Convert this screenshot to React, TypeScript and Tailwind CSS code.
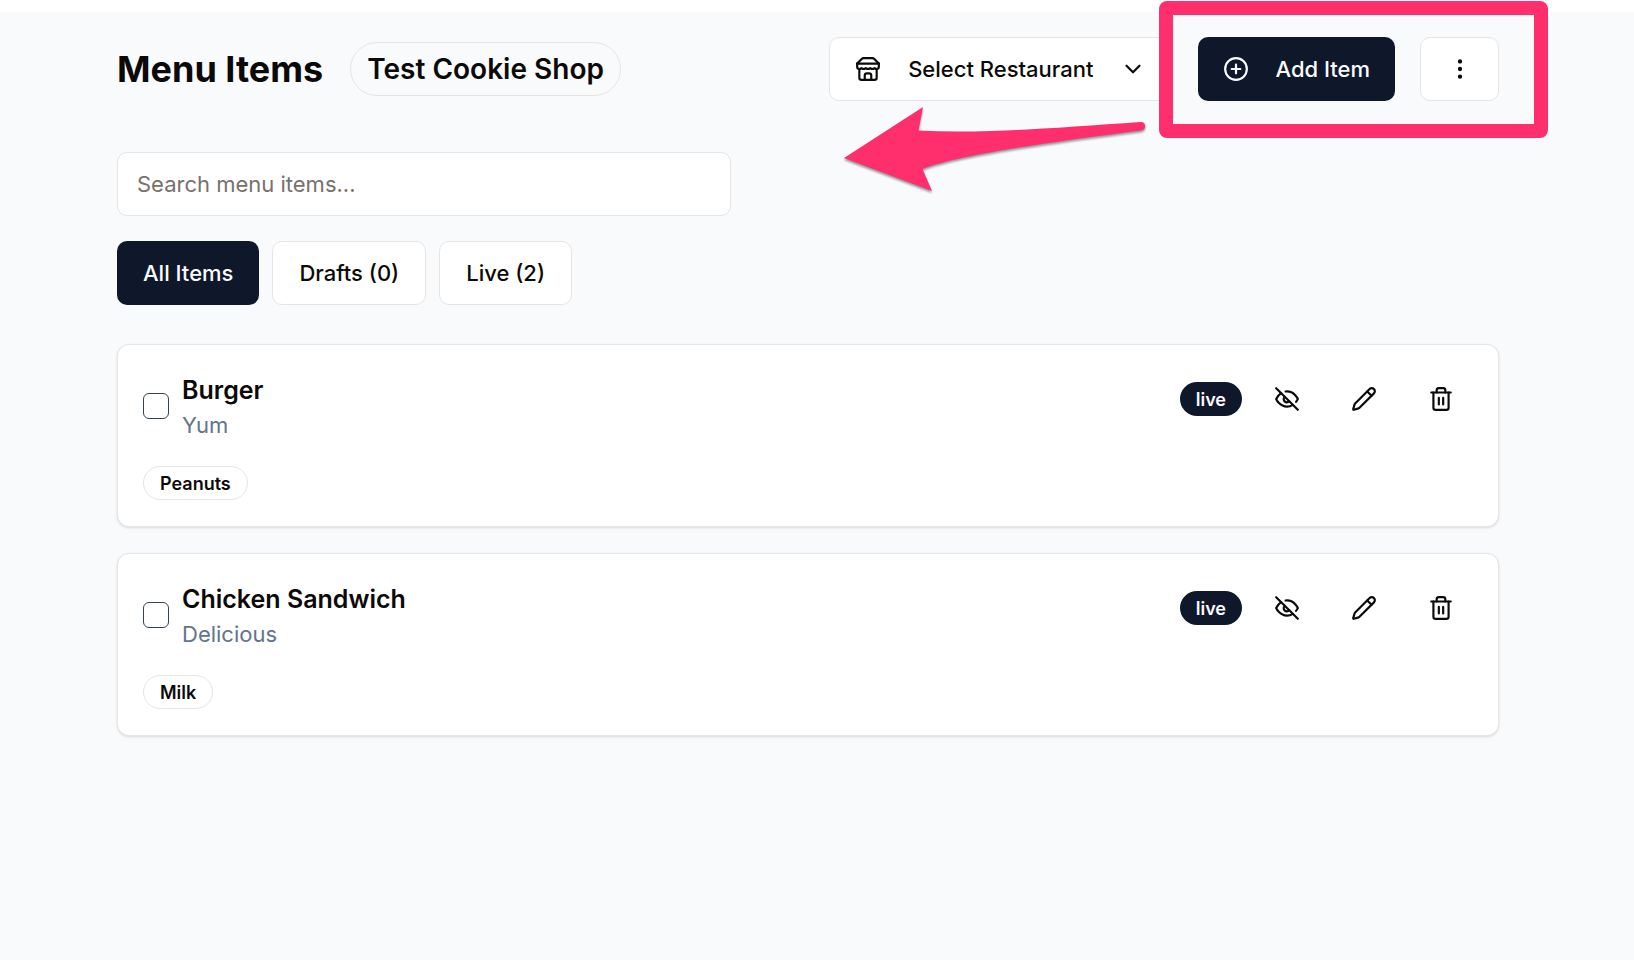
import { ChevronDown, CirclePlus, EllipsisVertical, Pencil, Trash2 } from "lucide-react";
import type { ReactNode } from "react";

type MenuItem = {
  id: string;
  name: string;
  description: string;
  allergens: string[];
};

const items: MenuItem[] = [
  { id: "burger", name: "Burger", description: "Yum", allergens: ["Peanuts"] },
  { id: "chicken", name: "Chicken Sandwich", description: "Delicious", allergens: ["Milk"] },
];

const outlineButton =
  "flex h-16 items-center justify-center rounded-[10px] border border-[#e7e5e4] bg-white text-[22px] font-medium";
const solidButton =
  "flex h-16 items-center justify-center rounded-[10px] bg-[#0f172a] text-[22px] font-medium text-slate-50";
const iconButton = "flex h-14 w-16 items-center justify-center rounded-[10px]";
const iconSize = "size-[26px] shrink-0";

function Icon({ children }: { children: ReactNode }) {
  return (
    <svg
      viewBox="0 0 24 24"
      className={iconSize}
      fill="none"
      stroke="currentColor"
      strokeWidth="2"
      strokeLinecap="round"
      strokeLinejoin="round"
      aria-hidden="true"
    >
      {children}
    </svg>
  );
}

function StoreIcon() {
  return (
    <Icon>
      <path d="m2 7 4.41-4.41A2 2 0 0 1 7.83 2h8.34a2 2 0 0 1 1.42.59L22 7" />
      <path d="M4 12v8a2 2 0 0 0 2 2h12a2 2 0 0 0 2-2v-8" />
      <path d="M15 22v-4a2 2 0 0 0-2-2h-2a2 2 0 0 0-2 2v4" />
      <path d="M2 7h20" />
      <path d="M22 7v3a2 2 0 0 1-2 2a2.7 2.7 0 0 1-1.59-.63.7.7 0 0 0-.82 0A2.7 2.7 0 0 1 16 12a2.7 2.7 0 0 1-1.59-.63.7.7 0 0 0-.82 0A2.7 2.7 0 0 1 12 12a2.7 2.7 0 0 1-1.59-.63.7.7 0 0 0-.82 0A2.7 2.7 0 0 1 8 12a2.7 2.7 0 0 1-1.59-.63.7.7 0 0 0-.82 0A2.7 2.7 0 0 1 4 12a2 2 0 0 1-2-2V7" />
    </Icon>
  );
}

function EyeOffIcon() {
  return (
    <Icon>
      <path d="M9.88 9.88a3 3 0 1 0 4.24 4.24" />
      <path d="M10.73 5.08A10.43 10.43 0 0 1 12 5c7 0 10 7 10 7a13.16 13.16 0 0 1-1.67 2.68" />
      <path d="M6.61 6.61A13.526 13.526 0 0 0 2 12s3 7 10 7a9.74 9.74 0 0 0 5.39-1.61" />
      <path d="M2 2l20 20" />
    </Icon>
  );
}

/* Highlight around the main actions, with an arrow pointing to their new place. */
function Callout() {
  return (
    <>
      <div className="pointer-events-none absolute -top-9 -right-[49px] -bottom-[37px] -left-[39px] rounded-lg border-[14px] border-[#ff2e6c]" />
      <svg
        viewBox="840 100 310 100"
        className="pointer-events-none absolute top-[63px] right-[349px] h-[100px] w-[310px] drop-shadow-[0_2px_1px_rgba(0,0,0,0.4)]"
        aria-hidden="true"
      >
        <path
          fill="#ff2e6c"
          d="M844 158 L923 107 L918.500 130.500 C985 134 1060 127.500 1140.500 122 C1146.500 121.500 1147 130 1141 130.500 C1060 141 960 154 922.500 169 L932 191 Z"
        />
      </svg>
    </>
  );
}

function ItemCard({ item }: { item: MenuItem }) {
  return (
    <li className="rounded-xl border border-[#e7e5e4] bg-white px-[25px] py-[26px] shadow-sm">
      <div className="flex items-start justify-between">
        <label className="flex items-center gap-[13px]">
          <input
            type="checkbox"
            className="size-[26px] shrink-0 appearance-none rounded-md border border-[#334155] bg-white checked:bg-[#0f172a]"
          />
          <span className="block">
            <span className="block text-[25px] leading-[38px] font-semibold">{item.name}</span>
            <span className="block text-[22px] leading-8 text-[#64748b]">{item.description}</span>
          </span>
        </label>
        <div className="flex items-center gap-[13px]">
          <span className="flex h-[34px] items-center rounded-full bg-[#0f172a] px-4 text-[18px] font-semibold text-slate-50">
            live
          </span>
          <button type="button" aria-label="Hide item" className={iconButton}>
            <EyeOffIcon />
          </button>
          <button type="button" aria-label="Edit item" className={iconButton}>
            <Pencil className={iconSize} />
          </button>
          <button type="button" aria-label="Delete item" className={iconButton}>
            <Trash2 className={iconSize} />
          </button>
        </div>
      </div>
      <div className="mt-[25px] flex gap-2">
        {item.allergens.map((a) => (
          <span
            key={a}
            className="flex h-[34px] items-center rounded-full border border-[#e7e5e4] px-4 text-[18px] font-semibold"
          >
            {a}
          </span>
        ))}
      </div>
    </li>
  );
}

export default function App() {
  return (
    <div className="min-h-screen border-t-12 border-white bg-[#f9fafc] font-['Inter',sans-serif] text-[#0c0a09]">
      <main className="pt-[25px] pr-[135px] pb-16 pl-[117px]">
        <header className="flex items-center justify-between">
          <div className="flex items-center gap-[27px]">
            <h1 className="text-[36px] leading-[48px] font-bold whitespace-nowrap">Menu Items</h1>
            <span className="flex h-[54px] items-center rounded-full border border-[#e7e5e4] px-4 text-[28px] font-semibold whitespace-nowrap">
              Test Cookie Shop
            </span>
          </div>
          <div className="flex items-center gap-[26px]">
            <button type="button" className={`${outlineButton} gap-[27px] px-[25px] whitespace-nowrap`}>
              <StoreIcon />
              Select Restaurant
              <ChevronDown className={iconSize} />
            </button>
            <div className="relative flex items-center gap-[25px]">
              <button type="button" className={`${solidButton} gap-[26px] px-[25px] whitespace-nowrap`}>
                <CirclePlus className={iconSize} />
                Add Item
              </button>
              <button type="button" aria-label="More actions" className={`${outlineButton} w-[79px]`}>
                <EllipsisVertical className={iconSize} />
              </button>
              <Callout />
            </div>
          </div>
        </header>

        <input
          type="search"
          aria-label="Search menu items"
          placeholder="Search menu items..."
          className="mt-[51px] block h-16 w-full max-w-[614px] rounded-[10px] border border-[#e7e5e4] bg-white px-[19px] text-[22px] placeholder:text-[#78716c]"
        />

        <nav className="mt-[25px] flex gap-[13px]">
          <button type="button" className={`${solidButton} px-[26px]`}>
            All Items
          </button>
          <button type="button" className={`${outlineButton} px-[26px]`}>
            Drafts (0)
          </button>
          <button type="button" className={`${outlineButton} px-[26px]`}>
            Live (2)
          </button>
        </nav>

        <ul className="mt-[39px] flex flex-col gap-[26px]">
          {items.map((item) => (
            <ItemCard key={item.id} item={item} />
          ))}
        </ul>
      </main>
    </div>
  );
}
